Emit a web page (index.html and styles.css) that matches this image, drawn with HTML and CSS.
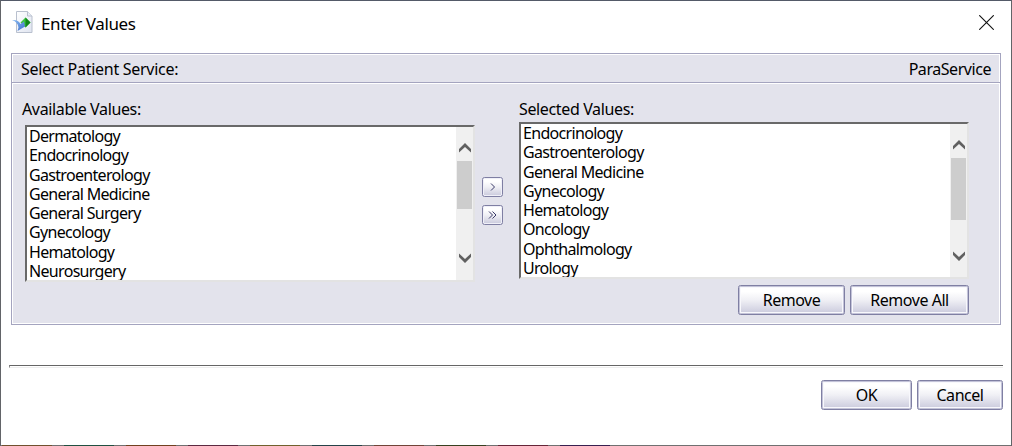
FILE: index.html
```html
<!DOCTYPE html>
<html lang="en">
<head>
<meta charset="utf-8">
<title>Enter Values</title>
<link rel="stylesheet" href="styles.css">
</head>
<body>
<div class="dialog">
  <header class="titlebar">
    <svg class="app-icon" width="21" height="22" viewBox="0 0 21 22">
      <defs>
        <linearGradient id="page" x1="0" y1="0" x2="1" y2="1"><stop offset="0" stop-color="#fff"/><stop offset="1" stop-color="#dfe4f0"/></linearGradient>
        <linearGradient id="sweep" x1="0" y1="0" x2="1" y2="1"><stop offset="0" stop-color="#8abcf2"/><stop offset="1" stop-color="#3f70cc"/></linearGradient>
      </defs>
      <path d="M4.500.5H15.500L20 5V21.500H4.500Z" fill="url(#page)" stroke="#b9c0ce"/>
      <path d="M15.500.5V5H20" fill="#e9edf5" stroke="#b9c0ce"/>
      <path d="M8.500 11.500L13.500 6.500L18.500 11.500L13.500 16.500Z" fill="#3bc440"/>
      <path d="M13.500 6.500L18.500 11.500L13.500 16.500Z" fill="#12851a"/>
      <path d="M0 9C4 8.500 7 10 8.500 13L12 10.500L13 15.500L5.500 20L6.500 16.500C6 12.500 3.500 10 0 9Z" fill="url(#sweep)"/>
    </svg>
    <h1 class="title">Enter Values</h1>
    <svg class="close" width="15" height="15" viewBox="0 0 15 15"><path d="M.25.25L14.750 14.750M14.750.25L.25 14.750" stroke="#111" stroke-width="1.100"/></svg>
  </header>
  <section class="panel">
    <div class="panel-head"><span class="prompt">Select Patient Service:</span><span class="param">ParaService</span></div>
    <div class="panel-body">
      <div class="available">
        <div class="label">Available Values:</div>
        <div class="listbox">
          <ul class="items"><li>Dermatology</li><li>Endocrinology</li><li>Gastroenterology</li><li>General Medicine</li><li>General Surgery</li><li>Gynecology</li><li>Hematology</li><li>Neurosurgery</li></ul>
          <div class="scrollbar">
            <svg class="arrow" width="12" height="10" viewBox="0 0 12 10"><path d="M0 6L6 0L12 6V9.500L6 4L0 9.500Z" fill="#606060"/></svg>
            <div class="track"><div class="thumb"></div></div>
            <svg class="arrow down" width="12" height="10" viewBox="0 0 12 10"><path d="M0 6L6 0L12 6V9.500L6 4L0 9.500Z" fill="#606060"/></svg>
          </div>
        </div>
      </div>
      <div class="movers">
        <button class="btn mini"><svg width="19" height="18" viewBox="0 0 19 18"><path d="M8 5.500L11.500 9L8 12.500" fill="none" stroke="#3a3a68"/></svg></button>
        <button class="btn mini"><svg width="19" height="18" viewBox="0 0 19 18"><path d="M6 5.500L9.500 9L6 12.500M9.500 5.500L13 9L9.500 12.500" fill="none" stroke="#3a3a68"/></svg></button>
      </div>
      <div class="selected">
        <div class="label">Selected Values:</div>
        <div class="listbox">
          <ul class="items"><li>Endocrinology</li><li>Gastroenterology</li><li>General Medicine</li><li>Gynecology</li><li>Hematology</li><li>Oncology</li><li>Ophthalmology</li><li>Urology</li></ul>
          <div class="scrollbar">
            <svg class="arrow" width="12" height="10" viewBox="0 0 12 10"><path d="M0 6L6 0L12 6V9.500L6 4L0 9.500Z" fill="#606060"/></svg>
            <div class="track"><div class="thumb tall"></div></div>
            <svg class="arrow down" width="12" height="10" viewBox="0 0 12 10"><path d="M0 6L6 0L12 6V9.500L6 4L0 9.500Z" fill="#606060"/></svg>
          </div>
        </div>
        <div class="actions"><button class="btn remove">Remove</button><button class="btn remove-all">Remove All</button></div>
      </div>
    </div>
  </section>
  <div class="rule"></div>
  <footer class="footer"><button class="btn ok">OK</button><button class="btn cancel">Cancel</button></footer>
  <div class="edge"><i></i><i></i><i></i><i></i><i></i><i></i><i></i><i></i><i></i><i></i></div>
</div>
</body>
</html>
```

FILE: styles.css
```css
* { box-sizing: border-box; }
body { margin: 0; font: 16px/19px "Noto Sans", "Open Sans", sans-serif; letter-spacing: -0.45px; color: #000; }
.dialog { display: flex; flex-direction: column; width: 1012px; height: 446px; background: #fff; border: 1px solid #626468; border-top-color: #545a68; border-bottom: 0; overflow: hidden; }
.titlebar { display: flex; height: 52px; padding: 10px 17px 0 11px; }
.app-icon { flex: none; }
.title { margin: 3px auto 0 8px; font-size: 17px; line-height: 20px; font-weight: 400; letter-spacing: -0.38px; }
.close { margin-top: 4px; }
.panel { width: 990px; height: 272px; margin-left: 10px; border: 1px solid #a4a4bf; background: #e3e3ec; box-shadow: inset 0 0 0 1px #fff; }
.panel-head { display: flex; justify-content: space-between; height: 29px; padding: 6px 9px 0; border-bottom: 1px solid #a4a4bf; }
.prompt { letter-spacing: -0.28px; }
.panel-body { display: flex; height: 241px; padding: 16px 31px 0 10px; border: 1px solid #fff; border-left: 0; border-right: 0; }
.label { letter-spacing: -0.36px; }
.available { width: 453px; }
.available .listbox { margin: 6px 0 0 3px; }
.selected { width: 450px; }
.selected .listbox { margin-top: 3px; }
.listbox { display: flex; width: 450px; height: 157px; background: #fff; border: 2px solid; border-color: #696969 #e3e3e3 #e3e3e3 #696969; overflow: hidden; }
.items { list-style: none; margin: 0; padding: 0 0 0 2px; flex: 1; line-height: 19.250px; letter-spacing: -0.68px; }
.scrollbar { width: 17px; background: #f0f0f0; display: flex; flex-direction: column; align-items: center; padding: 16px 0; }
.available .scrollbar { padding-bottom: 17px; }
.arrow { flex: none; }
.down { transform: rotate(180deg); }
.track { flex: 1; width: 15px; padding-top: 8px; }
.thumb { height: 48px; background: #cdcdcd; }
.tall { height: 62px; }
.movers { width: 44px; padding: 77px 0 0 7px; display: flex; flex-direction: column; gap: 8px; }
.btn { font: inherit; letter-spacing: inherit; color: #000; margin: 0; padding: 0; height: 30px; border: 1px solid #7f7fa3; border-radius: 2.500px; background: linear-gradient(#fff 20%, #f0f0f5 50%, #c9c9dc); box-shadow: inset 0 0 0 1px #c3c3d8, inset 0 0 0 2px #f8f8fc; }
.mini { width: 21px; height: 20px; box-shadow: inset 0 0 0 1px #f0f0f8; }
.mini svg { display: block; }
.actions { display: flex; justify-content: flex-end; gap: 5px; padding-top: 6px; }
.remove { width: 107px; }
.remove-all { width: 119px; }
.rule { width: 994px; height: 3px; margin: 40px 0 0 8px; border-top: 1px solid #666; border-left: 1px solid #888; border-bottom: 1px solid #eee; }
.footer { display: flex; justify-content: flex-end; gap: 5px; padding: 12px 8px 0 0; }
.ok { width: 91px; }
.cancel { width: 86px; }
/* Coloured strips along the bottom border */
.edge { display: flex; gap: 12px; height: 1px; margin-top: auto; padding-left: 1px; background: #707070; }
.edge i { width: 50px; height: 1px; background: #70502e; }
.edge i:nth-child(2) { background: #205040; }
.edge i:nth-child(3) { background: #70401f; }
.edge i:nth-child(4) { background: #5c2940; }
.edge i:nth-child(5) { background: #70612d; }
.edge i:nth-child(6) { background: #254348; }
.edge i:nth-child(7) { background: #704438; }
.edge i:nth-child(8) { background: #374020; }
.edge i:nth-child(9) { background: #652538; }
.edge i:nth-child(10) { background: #382050; }
```
